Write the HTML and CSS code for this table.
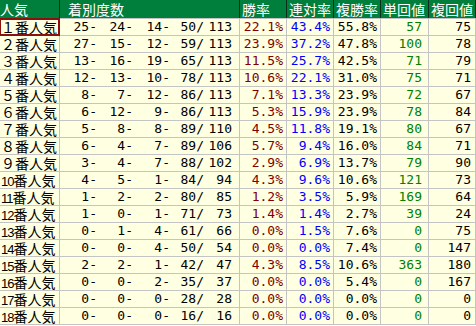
FILE: index.html
```html
<!DOCTYPE html>
<html lang="ja">
<head>
<meta charset="utf-8">
<title>人気別成績</title>
<link rel="stylesheet" href="styles.css">
</head>
<body>
<div class="sheet">
  <div class="head">
    <div class="hc hc-first">人気</div>
    <div class="hc hc-count">着別度数</div>
    <div class="hc">勝率</div>
    <div class="hc">連対率</div>
    <div class="hc">複勝率</div>
    <div class="hc">単回値</div>
    <div class="hc">複回値</div>
  </div>
  <div class="body">
    <div class="c lab sel">１番人気</div><div class="c cnt"><span class="g1">25-</span><span class="g2">24-</span><span class="g3">14-</span><span class="g4">50/</span><span class="g5">113</span></div><div class="c num win">22.1%</div><div class="c num ren">43.4%</div><div class="c num fuku">55.8%</div><div class="c num tan">57</div><div class="c num fk">75</div>
    <div class="c lab">２番人気</div><div class="c cnt"><span class="g1">27-</span><span class="g2">15-</span><span class="g3">12-</span><span class="g4">59/</span><span class="g5">113</span></div><div class="c num win">23.9%</div><div class="c num ren">37.2%</div><div class="c num fuku">47.8%</div><div class="c num tan">100</div><div class="c num fk">78</div>
    <div class="c lab">３番人気</div><div class="c cnt"><span class="g1">13-</span><span class="g2">16-</span><span class="g3">19-</span><span class="g4">65/</span><span class="g5">113</span></div><div class="c num win">11.5%</div><div class="c num ren">25.7%</div><div class="c num fuku">42.5%</div><div class="c num tan">71</div><div class="c num fk">79</div>
    <div class="c lab">４番人気</div><div class="c cnt"><span class="g1">12-</span><span class="g2">13-</span><span class="g3">10-</span><span class="g4">78/</span><span class="g5">113</span></div><div class="c num win">10.6%</div><div class="c num ren">22.1%</div><div class="c num fuku">31.0%</div><div class="c num tan">75</div><div class="c num fk">71</div>
    <div class="c lab">５番人気</div><div class="c cnt"><span class="g1">8-</span><span class="g2">7-</span><span class="g3">12-</span><span class="g4">86/</span><span class="g5">113</span></div><div class="c num win">7.1%</div><div class="c num ren">13.3%</div><div class="c num fuku">23.9%</div><div class="c num tan">72</div><div class="c num fk">67</div>
    <div class="c lab">６番人気</div><div class="c cnt"><span class="g1">6-</span><span class="g2">12-</span><span class="g3">9-</span><span class="g4">86/</span><span class="g5">113</span></div><div class="c num win">5.3%</div><div class="c num ren">15.9%</div><div class="c num fuku">23.9%</div><div class="c num tan">78</div><div class="c num fk">84</div>
    <div class="c lab">７番人気</div><div class="c cnt"><span class="g1">5-</span><span class="g2">8-</span><span class="g3">8-</span><span class="g4">89/</span><span class="g5">110</span></div><div class="c num win">4.5%</div><div class="c num ren">11.8%</div><div class="c num fuku">19.1%</div><div class="c num tan">80</div><div class="c num fk">67</div>
    <div class="c lab">８番人気</div><div class="c cnt"><span class="g1">6-</span><span class="g2">4-</span><span class="g3">7-</span><span class="g4">89/</span><span class="g5">106</span></div><div class="c num win">5.7%</div><div class="c num ren">9.4%</div><div class="c num fuku">16.0%</div><div class="c num tan">84</div><div class="c num fk">71</div>
    <div class="c lab">９番人気</div><div class="c cnt"><span class="g1">3-</span><span class="g2">4-</span><span class="g3">7-</span><span class="g4">88/</span><span class="g5">102</span></div><div class="c num win">2.9%</div><div class="c num ren">6.9%</div><div class="c num fuku">13.7%</div><div class="c num tan">79</div><div class="c num fk">90</div>
    <div class="c lab"><span class="ld">10</span>番人気</div><div class="c cnt"><span class="g1">4-</span><span class="g2">5-</span><span class="g3">1-</span><span class="g4">84/</span><span class="g5">94</span></div><div class="c num win">4.3%</div><div class="c num ren">9.6%</div><div class="c num fuku">10.6%</div><div class="c num tan">121</div><div class="c num fk">73</div>
    <div class="c lab"><span class="ld">11</span>番人気</div><div class="c cnt"><span class="g1">1-</span><span class="g2">2-</span><span class="g3">2-</span><span class="g4">80/</span><span class="g5">85</span></div><div class="c num win">1.2%</div><div class="c num ren">3.5%</div><div class="c num fuku">5.9%</div><div class="c num tan">169</div><div class="c num fk">64</div>
    <div class="c lab"><span class="ld">12</span>番人気</div><div class="c cnt"><span class="g1">1-</span><span class="g2">0-</span><span class="g3">1-</span><span class="g4">71/</span><span class="g5">73</span></div><div class="c num win">1.4%</div><div class="c num ren">1.4%</div><div class="c num fuku">2.7%</div><div class="c num tan">39</div><div class="c num fk">24</div>
    <div class="c lab"><span class="ld">13</span>番人気</div><div class="c cnt"><span class="g1">0-</span><span class="g2">1-</span><span class="g3">4-</span><span class="g4">61/</span><span class="g5">66</span></div><div class="c num win">0.0%</div><div class="c num ren">1.5%</div><div class="c num fuku">7.6%</div><div class="c num tan">0</div><div class="c num fk">75</div>
    <div class="c lab"><span class="ld">14</span>番人気</div><div class="c cnt"><span class="g1">0-</span><span class="g2">0-</span><span class="g3">4-</span><span class="g4">50/</span><span class="g5">54</span></div><div class="c num win">0.0%</div><div class="c num ren">0.0%</div><div class="c num fuku">7.4%</div><div class="c num tan">0</div><div class="c num fk">147</div>
    <div class="c lab"><span class="ld">15</span>番人気</div><div class="c cnt"><span class="g1">2-</span><span class="g2">2-</span><span class="g3">1-</span><span class="g4">42/</span><span class="g5">47</span></div><div class="c num win">4.3%</div><div class="c num ren">8.5%</div><div class="c num fuku">10.6%</div><div class="c num tan">363</div><div class="c num fk">180</div>
    <div class="c lab"><span class="ld">16</span>番人気</div><div class="c cnt"><span class="g1">0-</span><span class="g2">0-</span><span class="g3">2-</span><span class="g4">35/</span><span class="g5">37</span></div><div class="c num win">0.0%</div><div class="c num ren">0.0%</div><div class="c num fuku">5.4%</div><div class="c num tan">0</div><div class="c num fk">167</div>
    <div class="c lab"><span class="ld">17</span>番人気</div><div class="c cnt"><span class="g1">0-</span><span class="g2">0-</span><span class="g3">0-</span><span class="g4">28/</span><span class="g5">28</span></div><div class="c num win">0.0%</div><div class="c num ren">0.0%</div><div class="c num fuku">0.0%</div><div class="c num tan">0</div><div class="c num fk">0</div>
    <div class="c lab"><span class="ld">18</span>番人気</div><div class="c cnt"><span class="g1">0-</span><span class="g2">0-</span><span class="g3">0-</span><span class="g4">16/</span><span class="g5">16</span></div><div class="c num win">0.0%</div><div class="c num ren">0.0%</div><div class="c num fuku">0.0%</div><div class="c num tan">0</div><div class="c num fk">0</div>
  </div>
</div>
</body>
</html>
```
FILE: styles.css
```css
html, body {
  margin: 0;
  padding: 0;
  background: #ffffe2;
}
body {
  width: 476px;
  height: 326px;
  overflow: hidden;
}
.sheet {
  width: 476px;
  display: flex;
  flex-direction: column;
  font-family: "DejaVu Sans Mono", "Noto Sans CJK JP", monospace;
}
.head {
  display: grid;
  grid-template-columns: 59px 179px 46px 46px 46px 47px 46px;
  grid-template-rows: 18px;
  column-gap: 1px;
  background: #0c2d1a;
  padding-right: 1px;
}
.hc {
  background: #007e3c;
  color: #ffffff;
  font-family: "Noto Sans CJK JP", sans-serif;
  font-size: 14px;
  line-height: 18px;
  padding-left: 2px;
  white-space: nowrap;
}
.hc-first {
  padding-left: 0;
}
.hc-count {
  padding-left: 8px;
}
.body {
  display: grid;
  grid-template-columns: 59px 179px 46px 46px 46px 47px 46px;
  grid-auto-rows: 16px;
  gap: 1px;
  background: #c4c4c4;
  padding: 1px 1px 1px 0;
}
.c {
  background: #ffffe2;
  font-size: 13px;
  line-height: 16px;
  white-space: nowrap;
  color: #000000;
}
.lab {
  font-family: "Noto Sans CJK JP", sans-serif;
  font-size: 14px;
  padding-left: 1px;
}
.ld {
  font-family: "Liberation Sans", sans-serif;
  font-size: 13px;
  letter-spacing: -1px;
}
.sel {
  outline: 2px solid #8c1010;
  outline-offset: -1px;
  position: relative;
  z-index: 1;
}
.cnt {
  display: flex;
}
.cnt span {
  display: block;
  text-align: right;
}
.g1 { width: 37px; }
.g2 { width: 36px; }
.g3 { width: 37px; }
.g4 { width: 34px; }
.g5 { width: 28px; }
.num {
  text-align: right;
  padding-right: 3px;
}
.win { color: #800000; }
.ren { color: #0000ff; }
.fuku { color: #000000; }
.tan { color: #008000; padding-right: 6px; }
.fk { color: #000000; padding-right: 4px; }
```
